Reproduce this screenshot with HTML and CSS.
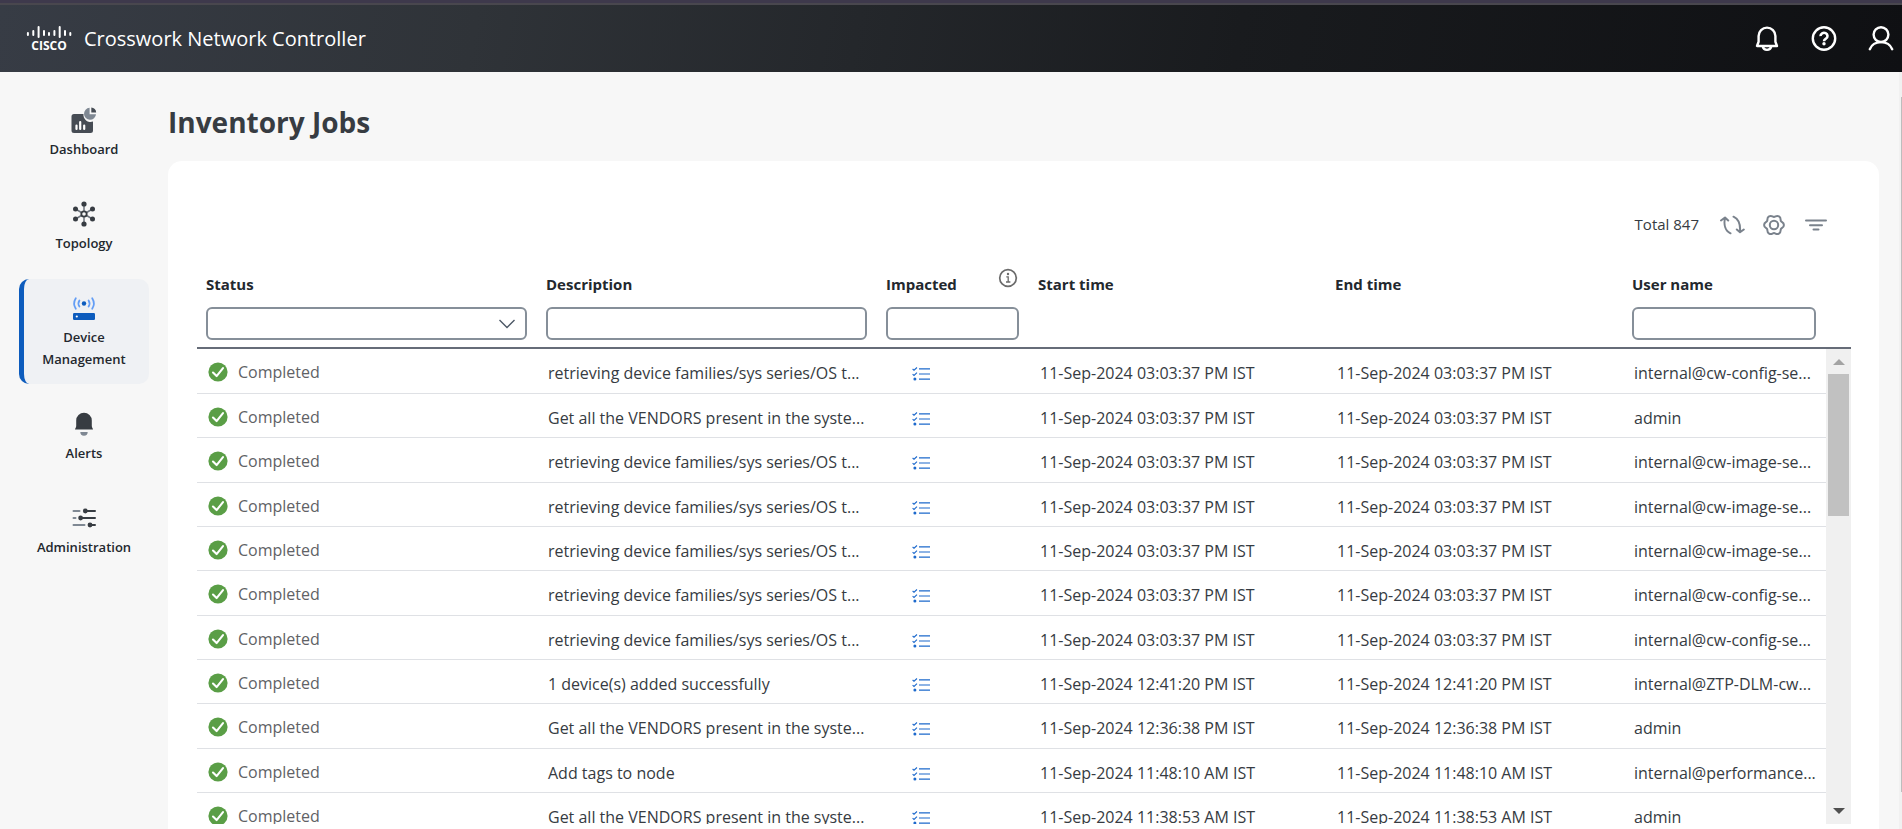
FILE: index.html
```html
<!DOCTYPE html>
<html lang="en">
<head>
<meta charset="utf-8">
<title>Crosswork Network Controller</title>
<link rel="stylesheet" href="styles.css">
</head>
<body>
<svg class="sprite" aria-hidden="true">
  <symbol id="ok" viewBox="0 0 20 20"><circle cx="10" cy="10" r="9.6" fill="#5a9e46"/><path d="M5 10.6l3.6 3.5 6.400-8" fill="none" stroke="#fff" stroke-width="2.100" stroke-linecap="round" stroke-linejoin="round"/></symbol>
  <symbol id="list" viewBox="0 0 18 14"><path d="M7 1.800h11M7 7h11M7 12.200h11" stroke="#1d69cc" stroke-width="1.200"/><path d="M.6 2l1.400 1.200L5 .5M.6 7.200L2 8.400l3-2.700" fill="none" stroke="#1d69cc" stroke-width="1.100"/><circle cx="2.900" cy="12" r="1.500" fill="#1d69cc"/></symbol>
</svg>
<div class="app">
  <header class="topbar">
    <a class="brand" href="#">
      <span class="logo">
        <svg width="46" height="14" viewBox="0 0 46 14" stroke="#fff" stroke-width="2" stroke-linecap="round"><path d="M1.900 8v2M7.300 6v4M12.600 2v10M18 6v4M23 8v2M28.400 6v4M33.700 2v10M39 6v4M44.300 8v2"/></svg>
        <span class="logo-word">CISCO</span>
      </span>
      <span class="product">Crosswork Network Controller</span>
    </a>
    <div class="actions">
      <button type="button" aria-label="Notifications"><svg width="26" height="28" viewBox="0 0 26 28" fill="none" stroke="#fff" stroke-width="2.400" stroke-linejoin="round"><path d="M3 21h20l-1.600-4.200V11a8.400 8.400 0 0 0-16.800 0v5.800z"/><path d="M8.800 21.500a4.300 4.300 0 0 0 8.400 0"/></svg></button>
      <button type="button" aria-label="Help"><svg width="26" height="28" viewBox="0 0 26 28" fill="none" stroke="#fff" stroke-width="2.400"><circle cx="13" cy="13.500" r="11.200"/><path d="M9.500 11.100a3.500 3.200 0 1 1 5.400 2.600c-1.300.8-1.900 1.200-1.900 2.600" stroke-width="2.600"/><circle cx="13" cy="18.800" r="1.700" fill="#fff" stroke="none"/></svg></button>
      <button type="button" aria-label="Account"><svg width="26" height="28" viewBox="0 0 26 28" fill="none" stroke="#fff" stroke-width="2.400" stroke-linecap="round"><circle cx="13" cy="9.600" r="7.400"/><path d="M1.800 24.200C3.600 19.800 8 17.100 13 17.100s9.400 2.700 11.200 7.100"/></svg></button>
    </div>
  </header>
  <div class="page">
    <nav class="sidebar">
      <a class="nav-item" href="#">
        <svg width="26" height="26" viewBox="0 0 26 26"><path d="M3 7h9.500a7 7 0 0 0 9.500 7.500V23.500a2.500 2.500 0 0 1-2.500 2.500H3a2.500 2.500 0 0 1-2.500-2.500V9.500A2.500 2.500 0 0 1 3 7z" fill="#464c54"/><path d="M5.500 18.500v3.500M9.200 15v7M13.200 18.500v3.500" stroke="#fff" stroke-width="2.200" stroke-linecap="round"/><path d="M18.600.800v6.400H25a6 6 0 1 1-6.400-6.400z" fill="#7f8893"/><path d="M20.300.600a5 5 0 0 1 4.900 4.900h-4.900z" fill="#464c54"/></svg>
        <span>Dashboard</span>
      </a>
      <a class="nav-item" href="#">
        <svg width="26" height="26" viewBox="0 0 26 26"><path d="M13 3v20M4.500 8l17 10M21.500 8l-17 10" stroke="#6d747e" stroke-width="1.500"/><g fill="#373c42"><circle cx="13" cy="3" r="2.600"/><circle cx="13" cy="23" r="2.600"/><circle cx="4.500" cy="8" r="2.500"/><circle cx="21.500" cy="8" r="2.500"/><circle cx="4.500" cy="18" r="2.500"/><circle cx="21.500" cy="18" r="2.500"/></g><circle cx="13" cy="13" r="2.700" fill="#f7f7f7" stroke="#373c42" stroke-width="1.800"/></svg>
        <span>Topology</span>
      </a>
      <a class="nav-item active" href="#" aria-current="page">
        <svg width="26" height="26" viewBox="0 0 26 26"><rect x="2" y="18" width="22" height="7" rx="1.200" fill="#0d5cbd"/><circle cx="5.800" cy="21.500" r="1.100" fill="#fff"/><circle cx="13" cy="8.500" r="2.200" fill="#0d5cbd"/><g fill="none" stroke="#649ef5" stroke-width="1.800" stroke-linecap="round"><path d="M8.400 5.500a5.500 5.500 0 0 0 0 6M17.600 5.500a5.500 5.500 0 0 1 0 6M4.800 3.200a10 10 0 0 0 0 10.600M21.200 3.200a10 10 0 0 1 0 10.600"/></g></svg>
        <span>Device Management</span>
      </a>
      <a class="nav-item" href="#">
        <svg width="26" height="26" viewBox="0 0 26 26"><path d="M4 18.500c0-1.300 1.200-1.800 1.200-3.500V9.500a7.800 7.800 0 0 1 15.600 0V15c0 1.700 1.200 2.200 1.200 3.500z" fill="#373c42"/><path d="M9.300 21h7.400a3.700 3.700 0 0 1-7.400 0z" fill="#7f8893"/></svg>
        <span>Alerts</span>
      </a>
      <a class="nav-item" href="#">
        <svg width="26" height="26" viewBox="0 0 26 26" stroke-width="2" stroke-linecap="round"><path d="M2.500 6h6M2.500 13h2M2.500 20h11" stroke="#7f8893"/><path d="M15 6h9M10 13h14M20 20h4" stroke="#373c42"/><g fill="#373c42"><circle cx="14.300" cy="6" r="2.400"/><circle cx="9.600" cy="13" r="2.400"/><circle cx="19" cy="20" r="2.400"/></g></svg>
        <span>Administration</span>
      </a>
    </nav>
    <main class="content">
      <h1>Inventory Jobs</h1>
      <section class="card">
        <div class="toolbar">
          <span class="total">Total 847</span>
          <button type="button" aria-label="Refresh"><svg width="26" height="24" viewBox="0 0 26 24" fill="none" stroke="#7a828c" stroke-width="2" stroke-linecap="round" stroke-linejoin="round"><path d="M11.500 20.300C6.500 18 4.500 12 6 5M2 7.500l4-3 3.200 3M14.500 3.700c5 2.300 7 8.300 6.500 15M17.800 16.500l3.200 2.800 3.800-2.800"/></svg></button>
          <button type="button" aria-label="Settings"><svg width="26" height="24" viewBox="0 0 26 24" fill="none" stroke="#7a828c" stroke-width="2"><circle cx="13" cy="12" r="4.200"/><path d="M22.900 12C22.900 15 20.700 14.600 19.900 16S20.550 19.100 17.950 20.600 14.600 20 13 20 10.650 22.100 8.050 20.600 6.900 17.400 6.100 16 3.100 15 3.100 12 5.300 9.400 6.100 8 5.450 4.900 8.050 3.400 11.400 4 13 4 15.350 1.900 17.950 3.400 19.100 6.600 19.900 8 22.900 9 22.900 12z"/></svg></button>
          <button type="button" aria-label="Filter"><svg width="26" height="24" viewBox="0 0 26 24" stroke="#7a828c" stroke-width="2" stroke-linecap="round"><path d="M3 7.500h20M7 12.200h12M10.500 16.500h5"/></svg></button>
        </div>
        <table class="grid grid-head">
          <colgroup><col class="c-wide"><col class="c-wide"><col class="c-imp"><col class="c-time"><col class="c-time"><col class="c-user"></colgroup>
          <thead>
            <tr>
              <th scope="col"><label for="f-status">Status</label></th>
              <th scope="col"><label for="f-desc">Description</label></th>
              <th scope="col"><span class="with-info"><label for="f-imp">Impacted</label><svg width="20" height="20" viewBox="0 0 20 20" fill="none" stroke="#6b6b6b" stroke-width="1.700"><circle cx="10" cy="10" r="8.300"/><path d="M8.300 8.800H10.200v5.200M8 14h4.400" stroke-width="1.300"/><circle cx="10" cy="6" r="1.200" fill="#6b6b6b" stroke="none"/></svg></span></th>
              <th scope="col">Start time</th>
              <th scope="col">End time</th>
              <th scope="col"><label for="f-user">User name</label></th>
            </tr>
            <tr class="filters">
              <td><div class="select"><select id="f-status"><option></option><option>Completed</option></select><svg width="18" height="10" viewBox="0 0 18 10" fill="none" stroke="#4d5866" stroke-width="1.400"><path d="M1.500 1L9 8.500 16.500 1"/></svg></div></td>
              <td><input id="f-desc" type="text"></td>
              <td><input id="f-imp" type="text"></td>
              <td></td>
              <td></td>
              <td><input id="f-user" type="text"></td>
            </tr>
          </thead>
        </table>
        <div class="scroll-area">
          <div class="rows">
            <table class="grid grid-body">
              <colgroup><col class="c-wide"><col class="c-wide"><col class="c-imp"><col class="c-time"><col class="c-time"><col class="c-user"></colgroup>
              <tbody>
                <tr><td><span class="status"><svg><use href="#ok"/></svg>Completed</span></td><td>retrieving device families/sys series/OS t...</td><td><a class="jobs" href="#" aria-label="Impacted devices"><svg><use href="#list"/></svg></a></td><td>11-Sep-2024 03:03:37 PM IST</td><td>11-Sep-2024 03:03:37 PM IST</td><td>internal@cw-config-se...</td></tr>
                <tr><td><span class="status"><svg><use href="#ok"/></svg>Completed</span></td><td>Get all the VENDORS present in the syste...</td><td><a class="jobs" href="#" aria-label="Impacted devices"><svg><use href="#list"/></svg></a></td><td>11-Sep-2024 03:03:37 PM IST</td><td>11-Sep-2024 03:03:37 PM IST</td><td>admin</td></tr>
                <tr><td><span class="status"><svg><use href="#ok"/></svg>Completed</span></td><td>retrieving device families/sys series/OS t...</td><td><a class="jobs" href="#" aria-label="Impacted devices"><svg><use href="#list"/></svg></a></td><td>11-Sep-2024 03:03:37 PM IST</td><td>11-Sep-2024 03:03:37 PM IST</td><td>internal@cw-image-se...</td></tr>
                <tr><td><span class="status"><svg><use href="#ok"/></svg>Completed</span></td><td>retrieving device families/sys series/OS t...</td><td><a class="jobs" href="#" aria-label="Impacted devices"><svg><use href="#list"/></svg></a></td><td>11-Sep-2024 03:03:37 PM IST</td><td>11-Sep-2024 03:03:37 PM IST</td><td>internal@cw-image-se...</td></tr>
                <tr><td><span class="status"><svg><use href="#ok"/></svg>Completed</span></td><td>retrieving device families/sys series/OS t...</td><td><a class="jobs" href="#" aria-label="Impacted devices"><svg><use href="#list"/></svg></a></td><td>11-Sep-2024 03:03:37 PM IST</td><td>11-Sep-2024 03:03:37 PM IST</td><td>internal@cw-image-se...</td></tr>
                <tr><td><span class="status"><svg><use href="#ok"/></svg>Completed</span></td><td>retrieving device families/sys series/OS t...</td><td><a class="jobs" href="#" aria-label="Impacted devices"><svg><use href="#list"/></svg></a></td><td>11-Sep-2024 03:03:37 PM IST</td><td>11-Sep-2024 03:03:37 PM IST</td><td>internal@cw-config-se...</td></tr>
                <tr><td><span class="status"><svg><use href="#ok"/></svg>Completed</span></td><td>retrieving device families/sys series/OS t...</td><td><a class="jobs" href="#" aria-label="Impacted devices"><svg><use href="#list"/></svg></a></td><td>11-Sep-2024 03:03:37 PM IST</td><td>11-Sep-2024 03:03:37 PM IST</td><td>internal@cw-config-se...</td></tr>
                <tr><td><span class="status"><svg><use href="#ok"/></svg>Completed</span></td><td>1 device(s) added successfully</td><td><a class="jobs" href="#" aria-label="Impacted devices"><svg><use href="#list"/></svg></a></td><td>11-Sep-2024 12:41:20 PM IST</td><td>11-Sep-2024 12:41:20 PM IST</td><td>internal@ZTP-DLM-cw...</td></tr>
                <tr><td><span class="status"><svg><use href="#ok"/></svg>Completed</span></td><td>Get all the VENDORS present in the syste...</td><td><a class="jobs" href="#" aria-label="Impacted devices"><svg><use href="#list"/></svg></a></td><td>11-Sep-2024 12:36:38 PM IST</td><td>11-Sep-2024 12:36:38 PM IST</td><td>admin</td></tr>
                <tr><td><span class="status"><svg><use href="#ok"/></svg>Completed</span></td><td>Add tags to node</td><td><a class="jobs" href="#" aria-label="Impacted devices"><svg><use href="#list"/></svg></a></td><td>11-Sep-2024 11:48:10 AM IST</td><td>11-Sep-2024 11:48:10 AM IST</td><td>internal@performance...</td></tr>
                <tr><td><span class="status"><svg><use href="#ok"/></svg>Completed</span></td><td>Get all the VENDORS present in the syste...</td><td><a class="jobs" href="#" aria-label="Impacted devices"><svg><use href="#list"/></svg></a></td><td>11-Sep-2024 11:38:53 AM IST</td><td>11-Sep-2024 11:38:53 AM IST</td><td>admin</td></tr>
              </tbody>
            </table>
          </div>
          <div class="scrollbar" aria-hidden="true">
            <svg width="12" height="6" viewBox="0 0 12 6"><path d="M0 6l6-6 6 6z" fill="#a3a3a3"/></svg>
            <div class="thumb"></div>
            <svg width="12" height="6" viewBox="0 0 12 6"><path d="M0 0l6 6 6-6z" fill="#505050"/></svg>
          </div>
        </div>
      </section>
    </main>
    <div class="page-scroll" aria-hidden="true"><div class="page-thumb"></div></div>
  </div>
</div>
</body>
</html>
```
FILE: styles.css
```css
* { box-sizing: border-box; }
body {
  margin: 0;
  background: #f7f7f7;
  color: #23282e;
  font-family: "Open Sans", "Noto Sans", sans-serif;
  font-size: 16px;
  line-height: 22px;
}
button { border: 0; padding: 0; background: none; font: inherit; cursor: pointer; }
a { color: inherit; text-decoration: none; }
svg { display: block; flex: none; }
.sprite { position: absolute; width: 0; height: 0; }

.app { display: flex; flex-direction: column; height: 100vh; border-top: 3px solid #3e394c; overflow: hidden; }
.topbar {
  display: flex;
  align-items: center;
  justify-content: space-between;
  flex: none;
  height: 69px;
  padding: 0 8px 0 26px;
  border-top: 2px solid #49474e;
  background: linear-gradient(100deg, #373c45 0%, #2f3338 25%, #191b1e 65%, #0f1013 100%);
  color: #fff;
}
.brand { display: flex; align-items: center; gap: 12px; }
.logo { display: flex; flex-direction: column; align-items: center; gap: 1px; }
.logo-word { font-size: 12px; font-weight: 700; line-height: 12px; }
.product { font-size: 20px; line-height: 28px; }
.actions { display: flex; gap: 31px; }

.page { display: flex; flex: 1; min-height: 0; }
.sidebar { display: flex; flex-direction: column; gap: 11px; flex: none; width: 168px; padding: 19px 19px 0; }
.nav-item {
  display: flex;
  flex-direction: column;
  align-items: center;
  gap: 5px;
  padding: 16px 5px 14px 0;
  font-size: 13px;
  font-weight: 600;
  text-align: center;
  border-left: 5px solid transparent;
  border-radius: 10px;
}
.nav-item.active { background: #eff1f4; border-left-color: #0d5cbd; }

.content { display: flex; flex: 1; flex-direction: column; min-width: 0; padding-right: 20px; }
h1 { margin: 0; padding: 30px 0 19px; color: #373c42; font-size: 28px; font-weight: 700; line-height: 40px; }
.card {
  display: flex;
  flex: 1;
  flex-direction: column;
  min-height: 0;
  padding: 50px 28px 5px 29px;
  background: #fff;
  border-radius: 14px 14px 0 0;
}
.toolbar { display: flex; align-items: center; gap: 16px; padding: 0 22px 36px 0; justify-content: flex-end; }
.toolbar button { padding-top: 2px; }
.total { margin-right: 4px; color: #363b42; font-size: 15px; }

.grid { table-layout: fixed; border-collapse: collapse; width: 100%; }
.grid-head { width: calc(100% - 25px); }
.c-wide { width: 340px; }
.c-imp { width: 152px; }
.c-time { width: 297px; }
.c-user { width: 203px; }
th { padding: 0 9px 12px; font-size: 15px; font-weight: 700; text-align: left; }
.with-info { display: flex; justify-content: space-between; align-items: flex-start; height: 22px; padding-right: 2px; }
.with-info svg { margin-top: -5px; }
.filters td { padding: 0 10px 7px 9px; }
input, select {
  display: block;
  width: 100%;
  height: 33px;
  padding: 0 10px;
  border: 2px solid #868f99;
  border-radius: 6px;
  background: #fff;
  font: inherit;
  color: inherit;
  appearance: none;
}
.select { display: grid; align-items: center; }
.select > * { grid-area: 1 / 1; }
.select svg { justify-self: end; margin-right: 11px; pointer-events: none; }

.scroll-area { display: flex; flex: 1; min-height: 0; border-top: 2px solid #666c78; }
.rows { flex: 1; min-width: 0; overflow: hidden; }
.grid-body { color: #363b42; }
.grid-body tr { height: 44px; }
.grid-body tr:nth-child(3n) { height: 45px; }
.grid-body td { padding: 5px 0 0 11px; border-bottom: 1px solid #dfe1e5; white-space: nowrap; vertical-align: middle; }
.grid-body td:first-child { padding-top: 3px; }
.status { display: flex; align-items: center; gap: 10px; color: #5f6266; }
.status svg { width: 20px; height: 20px; }
.jobs { display: block; width: 18px; padding-top: 2px; margin-left: 24px; }
.jobs svg { width: 18px; height: 14px; }
.scrollbar { display: flex; flex-direction: column; align-items: center; width: 25px; padding: 10px 2px; background: #f0f0f0; }
.thumb { width: 21px; height: 142px; margin: 9px 0 auto; background: #c1c1c1; }

.page-scroll { flex: none; width: 3px; padding: 25px 0 0 2px; background: #f1f1f1; }
.page-thumb { height: 95%; background: #bdbdbd; }
```
